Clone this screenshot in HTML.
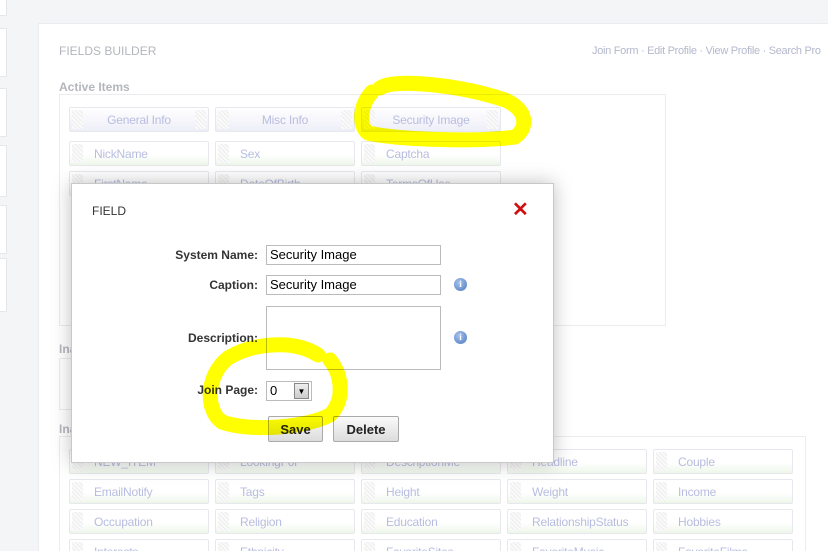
<!DOCTYPE html>
<html><head><meta charset="utf-8"><style>
html,body{margin:0;width:828px;height:551px;overflow:hidden}
body{background:#f4f5f7;font-family:"Liberation Sans",Arial,sans-serif;position:relative}
.a{position:absolute}
.lb{position:absolute;left:0;width:6px;background:#fff;border:1px solid #e6e7ea;border-left:none}
.panel{left:38px;top:23px;width:800px;height:540px;background:#fff;border:1px solid #ececf0}
.it{position:absolute;width:140px;height:25px;border:1px solid #e6e8ee;border-radius:2px;background:linear-gradient(#fff 55%,#eef7ea);font-size:12px;color:#b8bde0;line-height:24px;box-sizing:border-box;padding-left:24px;white-space:nowrap;overflow:hidden;letter-spacing:-0.2px}
.it:before{content:"";position:absolute;left:2px;top:2px;width:11px;height:19px;background:repeating-linear-gradient(45deg,#eee 0 1px,#fafafa 1px 3px)}
.hd{background:linear-gradient(#fff,#eeeef8);text-align:center;padding-left:0}
.hd:after{content:"";position:absolute;right:2px;top:2px;width:11px;height:19px;background:repeating-linear-gradient(45deg,#eee 0 1px,#fafafa 1px 3px)}
.lab{position:absolute;font-size:12px;font-weight:bold;color:#333;text-align:right;width:120px}
.inp{position:absolute;border:1px solid #bbb;background:#fff;font-size:13px;color:#000;box-sizing:border-box;padding-left:3px;line-height:18px}
.info{position:absolute;width:13px;height:13px;border-radius:50%;background:radial-gradient(circle at 40% 35%,#a8c4ee,#4a78bd);color:#fff;font-size:9px;font-weight:bold;text-align:center;line-height:13px;font-family:"Liberation Serif",serif}
.btn{position:absolute;height:26px;border:1px solid #aaa;border-radius:2px;background:linear-gradient(#fafafa,#dcdcdc);font-size:13px;font-weight:bold;color:#222;text-align:center;line-height:26px;box-sizing:border-box}
</style></head><body>
<div class="lb" style="top:-2px;height:16px"></div>
<div class="lb" style="top:28px;height:47px"></div>
<div class="lb" style="top:88px;height:47px"></div>
<div class="lb" style="top:145px;height:50px"></div>
<div class="lb" style="top:205px;height:47px"></div>
<div class="lb" style="top:258px;height:52px"></div>
<div class="a panel"></div>
<div class="a" style="left:59px;top:44px;font-size:12px;color:#b4b6bd">FIELDS BUILDER</div>
<div class="a" style="left:592px;top:45px;font-size:11px;color:#b4b8cc;white-space:nowrap;letter-spacing:-0.3px">Join Form · Edit Profile · View Profile · Search Pro</div>
<div class="a" style="left:59px;top:80px;font-size:12px;font-weight:bold;color:#b4b6bd">Active Items</div>
<div class="a" style="left:59px;top:94px;width:605px;height:230px;border:1px solid #ececf0"></div>
<div class="it hd" style="left:69px;top:107px">General Info</div>
<div class="it hd" style="left:215px;top:107px">Misc Info</div>
<div class="it hd" style="left:361px;top:107px">Security Image</div>
<div class="it" style="left:69px;top:141px">NickName</div>
<div class="it" style="left:215px;top:141px">Sex</div>
<div class="it" style="left:361px;top:141px">Captcha</div>
<div class="it" style="left:69px;top:171px">FirstName</div>
<div class="it" style="left:215px;top:171px">DateOfBirth</div>
<div class="it" style="left:361px;top:171px">TermsOfUse</div>
<div class="a" style="left:59px;top:342px;font-size:12px;font-weight:bold;color:#b4b6bd">Ina</div>
<div class="a" style="left:59px;top:358px;width:60px;height:50px;border:1px solid #ececf0"></div>
<div class="a" style="left:59px;top:422px;font-size:12px;font-weight:bold;color:#b4b6bd">Ina</div>
<div class="a" style="left:59px;top:436px;width:745px;height:130px;border:1px solid #ececf0"></div>
<div class="it" style="left:69px;top:449px">NEW_ITEM</div><div class="it" style="left:215px;top:449px">LookingFor</div><div class="it" style="left:361px;top:449px">DescriptionMe</div><div class="it" style="left:507px;top:449px">Headline</div><div class="it" style="left:653px;top:449px">Couple</div>
<div class="it" style="left:69px;top:479px">EmailNotify</div><div class="it" style="left:215px;top:479px">Tags</div><div class="it" style="left:361px;top:479px">Height</div><div class="it" style="left:507px;top:479px">Weight</div><div class="it" style="left:653px;top:479px">Income</div>
<div class="it" style="left:69px;top:509px">Occupation</div><div class="it" style="left:215px;top:509px">Religion</div><div class="it" style="left:361px;top:509px">Education</div><div class="it" style="left:507px;top:509px">RelationshipStatus</div><div class="it" style="left:653px;top:509px">Hobbies</div>
<div class="it" style="left:69px;top:539px">Interests</div><div class="it" style="left:215px;top:539px">Ethnicity</div><div class="it" style="left:361px;top:539px">FavoriteSites</div><div class="it" style="left:507px;top:539px">FavoriteMusic</div><div class="it" style="left:653px;top:539px">FavoriteFilms</div>

<div class="a" style="left:71px;top:183px;width:481px;height:278px;background:#fff;border:1px solid #c8c8c8;box-shadow:0 0 18px rgba(0,0,0,.25)"></div>
<div class="a" style="left:92px;top:204px;font-size:12px;color:#333">FIELD</div>
<div class="a" style="left:512px;top:200px;font-size:20px;font-weight:bold;color:#d01010;line-height:20px">✕</div>
<div class="lab" style="left:138px;top:248px">System Name:</div>
<div class="inp" style="left:266px;top:245px;width:175px;height:20px">Security Image</div>
<div class="lab" style="left:138px;top:278px">Caption:</div>
<div class="inp" style="left:266px;top:275px;width:175px;height:20px">Security Image</div>
<div class="info" style="left:454px;top:278px">i</div>
<div class="lab" style="left:138px;top:331px">Description:</div>
<div class="inp" style="left:266px;top:306px;width:175px;height:64px"></div>
<div class="info" style="left:454px;top:331px">i</div>
<div class="lab" style="left:138px;top:383px">Join Page:</div>
<div class="inp" style="left:266px;top:381px;width:46px;height:20px">0</div>
<div class="a" style="left:294px;top:383px;width:15px;height:16px;background:linear-gradient(#eee,#ccc);border:1px solid #888;box-sizing:border-box;font-size:8px;text-align:center;line-height:15px">▼</div>
<div class="btn" style="left:268px;top:416px;width:55px">Save</div>
<div class="btn" style="left:333px;top:416px;width:66px">Delete</div>

<svg class="a" style="left:0;top:0;mix-blend-mode:multiply" width="828" height="551">
<g fill="none" stroke="#ffff00" stroke-width="15" stroke-linecap="round" stroke-linejoin="round">
<path d="M380 88 C395 78,460 85,505 100 C528 110,528 128,515 137 C480 142,400 140,368 133 C358 125,360 105,372 92"/>
<path d="M318 355 C295 340,255 342,228 358 C206 375,205 410,222 422 C250 432,305 428,330 415 C345 400,342 375,330 360"/>
</g></svg>
</body></html>
